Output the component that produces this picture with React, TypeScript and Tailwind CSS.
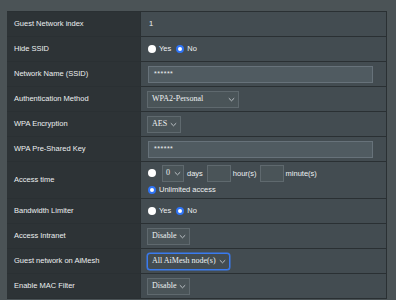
import React from "react";

const sans = { fontFamily: '"Liberation Sans", Arial, sans-serif' };
const serif = { fontFamily: '"Liberation Serif", "Times New Roman", serif' };

function Chevron() {
  return (
    <svg width="7" height="5" viewBox="0 0 7 5" className="ml-[3px] shrink-0">
      <path d="M0.8 1.2 L3.5 3.8 L6.2 1.2" fill="none" stroke="#c9cfd2" strokeWidth="0.9" />
    </svg>
  );
}

function Select({ text, w, focus }: { text: string; w: string; focus?: boolean }) {
  return (
    <div
      className={`flex h-[17px] shrink-0 items-center justify-between whitespace-nowrap pl-[4px] pr-[3px] text-[8px] text-[#eef1f2] ${w} ${
        focus ? "rounded-[3px] border border-[#3a7bf0] bg-[#434c51] shadow-[0_0_0_0.5px_#3a7bf0]" : "border border-[#5f696e] bg-[#4a5458]"
      }`}
      style={serif}
    >
      <span>{text}</span>
      <Chevron />
    </div>
  );
}

function Radio({ checked }: { checked?: boolean }) {
  return checked ? (
    <span className="inline-block h-[8px] w-[8px] shrink-0 rounded-full border-[2px] border-[#2f74f5] bg-white" />
  ) : (
    <span className="inline-block h-[8px] w-[8px] shrink-0 rounded-full bg-white" />
  );
}

function YesNo() {
  return (
    <div className="flex items-center text-[7.5px] text-[#eef1f2]">
      <Radio />
      <span className="ml-[3px]">Yes</span>
      <span className="ml-[5px] flex">
        <Radio checked />
      </span>
      <span className="ml-[3px]">No</span>
    </div>
  );
}

function TextInput() {
  return (
    <div className="flex h-[17px] w-[225px] items-center border border-[#67727a] bg-[#505b61] pl-[5px] text-[7px] tracking-[0.5px] text-[#eef1f2]" style={sans}>
      ******
    </div>
  );
}

function Row({ label, children, h = "h-[25px]" }: { label: string; children: React.ReactNode; h?: string }) {
  return (
    <div className={`flex ${h} border-t border-[#2a3033]`}>
      <div className="flex w-[133px] shrink-0 items-center bg-[#2d3336] pl-[7px] text-[7.5px] text-[#eceff0]">{label}</div>
      <div className="flex flex-1 items-center border-l border-[#2a3033] bg-[#434c51] pl-[7px]">{children}</div>
    </div>
  );
}

export default function App() {
  return (
    <div className="h-[300px] w-[396px] bg-[#4b5356] pl-[7px] pt-[11px]" style={sans}>
      <div className="w-[380px] border-b border-r border-[#2a3033]">
        <Row label="Guest Network index">
          <span className="pl-[1px] text-[7.5px] text-[#eef1f2]">1</span>
        </Row>
        <Row label="Hide SSID">
          <YesNo />
        </Row>
        <Row label="Network Name (SSID)">
          <TextInput />
        </Row>
        <Row label="Authentication Method">
          <div className="-ml-[1px] flex">
            <Select text="WPA2-Personal" w="w-[92px]" />
          </div>
        </Row>
        <Row label="WPA Encryption">
          <div className="-ml-[1px] flex">
            <Select text="AES" w="min-w-[30px]" />
          </div>
        </Row>
        <Row label="WPA Pre-Shared Key">
          <TextInput />
        </Row>
        <Row label="Access time" h="h-[37px]">
          <div className="flex flex-col text-[7.5px] text-[#eef1f2]">
            <div className="flex items-center whitespace-nowrap">
              <Radio />
              <div className="ml-[6px] flex h-[17px] w-[22px] shrink-0 items-center justify-between border border-[#5f696e] bg-[#4a5458] pl-[3px] pr-[2px] text-[8px]" style={serif}>
                <span>0</span>
                <Chevron />
              </div>
              <span className="ml-[3px]">days</span>
              <div className="ml-[4px] h-[17px] w-[24px] shrink-0 border border-[#5f696e] bg-[#4a5458]" />
              <span className="ml-[2px]">hour(s)</span>
              <div className="ml-[3px] h-[17px] w-[24px] shrink-0 border border-[#5f696e] bg-[#4a5458]" />
              <span className="ml-[2px]">minute(s)</span>
            </div>
            <div className="mt-[2px] flex items-center">
              <Radio checked />
              <span className="ml-[3px]">Unlimited access</span>
            </div>
          </div>
        </Row>
        <Row label="Bandwidth Limiter">
          <YesNo />
        </Row>
        <Row label="Access Intranet">
          <div className="-ml-[1px] flex">
            <Select text="Disable" w="min-w-[40px]" />
          </div>
        </Row>
        <Row label="Guest network on AiMesh">
          <div className="-ml-[1px] flex">
            <Select text="All AiMesh node(s)" w="min-w-[81px]" focus />
          </div>
        </Row>
        <Row label="Enable MAC Filter" h="h-[25px]">
          <div className="-ml-[1px] flex">
            <Select text="Disable" w="min-w-[40px]" />
          </div>
        </Row>
      </div>
    </div>
  );
}
